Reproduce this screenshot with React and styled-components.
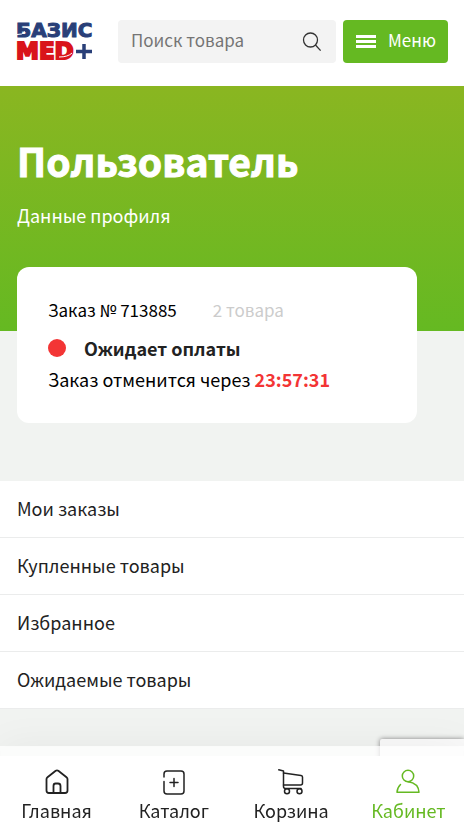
import React from 'react'
import styled, { createGlobalStyle } from 'styled-components'

const App = () => {
  return (
    <Page>
      <GlobalStyle />
      <Header>
        <LogoLink href="/" aria-label="БАЗИС MED+">
          <Logo />
        </LogoLink>
        <Search role="search">
          <SearchInput type="text" placeholder="Поиск товара" aria-label="Поиск товара" />
          <SearchButton type="button" aria-label="Найти">
            <svg width="20" height="20" viewBox="0 0 20 20" fill="none" stroke="#333" strokeWidth="1.3">
              <circle cx="8.500" cy="8" r="7" />
              <path d="M13.500 13L18.600 18.600" />
            </svg>
          </SearchButton>
        </Search>
        <MenuButton type="button">
          <Burger>
            <Bar />
            <Bar />
            <Bar />
          </Burger>
          <MenuText>Меню</MenuText>
        </MenuButton>
      </Header>

      <Hero>
        <Title>Пользователь</Title>
        <ProfileLink href="#profile">Данные профиля</ProfileLink>
      </Hero>

      <Card>
        <CardTop>
          <span>Заказ № 713885</span>
          <Count>2 товара</Count>
        </CardTop>
        <Status>
          <Dot />
          Ожидает оплаты
        </Status>
        <Cancel>
          Заказ отменится через <Timer>23:57:31</Timer>
        </Cancel>
      </Card>

      <Links>
        <Row href="#orders">Мои заказы</Row>
        <Row href="#bought">Купленные товары</Row>
        <Row href="#favorites">Избранное</Row>
        <Row href="#waiting">Ожидаемые товары</Row>
      </Links>

      <Badge />
      <Bottom>
        <Nav>
          <NavItem href="#home">
            <HomeIcon />
            Главная
          </NavItem>
          <NavItem href="#catalog">
            <CatalogIcon />
            Каталог
          </NavItem>
          <NavItem href="#cart">
            <CartIcon />
            Корзина
          </NavItem>
          <NavItem href="#cabinet" $active>
            <UserIcon />
            Кабинет
          </NavItem>
        </Nav>
      </Bottom>
    </Page>
  )
}

export default App

const Logo = () => (
  <svg width="76" height="40" viewBox="0 0 76 40" overflow="visible">
    <g fontFamily="'DejaVu Sans', sans-serif" fontWeight="700">
      <text x="-1" y="15" fontSize="20" fill="#293f78" stroke="#293f78" strokeWidth="1">БАЗИС</text>
      <text x="-1" y="37" fontSize="23" fill="#d9141b" stroke="#d9141b" strokeWidth="2">MED</text>
    </g>
    <path d="M0 12.500Q5 13 8 9.500" stroke="#fff" strokeWidth="1" fill="none" />
    <path d="M42 35Q51 35 55 31" stroke="#fff" strokeWidth="1" fill="none" />
    <path d="M67 22V37M60 29.500H75" stroke="#fff" strokeWidth="5.500" />
    <path d="M67 22V37M59 29.500H75" stroke="#293f78" strokeWidth="3.500" />
  </svg>
)

const HomeIcon = () => (
  <svg width="26" height="26" viewBox="0 0 26 26" fill="none" stroke="#222" strokeWidth="1.800" strokeLinejoin="round">
    <path d="M2.500 10Q2.500 9 3.500 8.200L11.700 1.800Q13 .8 14.300 1.800L22.500 8.200Q23.500 9 23.500 10V21.500Q23.500 24 21 24H5Q2.500 24 2.500 21.500Z" />
    <path d="M9.500 24V17Q9.500 14.500 11.500 14.500H14Q16.500 14.500 16.500 17V24" />
  </svg>
)

const CatalogIcon = () => (
  <svg width="26" height="26" viewBox="0 0 26 26" fill="none" stroke="#222" strokeWidth="1.500" strokeLinecap="round">
    <path d="M3 8V5Q3 2 6 2H20Q23 2 23 5V22Q23 25 20 25H6Q3 25 3 22V12.500" />
    <path d="M13 9.500V17.500M9 13.500H17" />
  </svg>
)

const CartIcon = () => (
  <svg width="26" height="26" viewBox="0 0 26 26" fill="none" stroke="#222" strokeWidth="1.500" strokeLinecap="round" strokeLinejoin="round">
    <path d="M.8 .8L5.500 2V17.500Q5.500 19.500 7.500 19.500H23" />
    <path d="M5.500 4L23 6.500Q24.500 6.800 24.500 8V14Q24.500 16 22.500 16H5.500" />
    <circle cx="9" cy="22.300" r="2.500" />
    <circle cx="21.500" cy="22.300" r="2.500" />
  </svg>
)

const UserIcon = () => (
  <svg width="26" height="26" viewBox="0 0 26 26" fill="none" stroke="#65b922" strokeWidth="1.500" strokeLinecap="round" strokeLinejoin="round">
    <circle cx="13" cy="7" r="5.700" />
    <path d="M5.500 15.500Q2.300 18.500 2 23.300H24Q23.500 14 13 12.700" />
  </svg>
)

const GlobalStyle = createGlobalStyle`
  * {
    box-sizing: border-box;
  }
  body {
    margin: 0;
    background: #f1f3f1;
    color: #222;
    font-family: "Noto Sans CJK SC", "Open Sans", sans-serif;
    font-size: 18px;
    line-height: 24px;
  }
  a {
    color: inherit;
    text-decoration: none;
  }
  button, input {
    font: inherit;
    border: 0;
    padding: 0;
  }
`

const Page = styled.div`
  min-height: 100vh;
  padding-bottom: 82px;
`

const Header = styled.header`
  display: flex;
  align-items: center;
  padding: 20px 16px 23px 17px;
  background: #fff;
`

const LogoLink = styled.a`
  display: flex;
  margin-right: 25px;
`

const Search = styled.form`
  display: flex;
  flex: 1;
  min-width: 0;
  height: 43px;
  margin-right: 7px;
  background: #f3f3f3;
  border-radius: 4px;
`

const SearchInput = styled.input`
  flex: 1;
  min-width: 0;
  padding: 0 0 4px 13px;
  background: none;
  outline: none;
  font-size: 17px;
  &::placeholder {
    color: #757575;
  }
`

const SearchButton = styled.button`
  display: flex;
  align-items: center;
  padding-right: 14px;
  background: none;
  cursor: pointer;
`

const MenuButton = styled.button`
  display: flex;
  align-items: center;
  gap: 12px;
  height: 43px;
  padding: 0 12px 0 13px;
  background: #65b922;
  color: #fff;
  font-size: 17px;
  border-radius: 4px;
  cursor: pointer;
`

const MenuText = styled.span`
  padding-bottom: 3px;
`

const Burger = styled.span`
  display: flex;
  flex-direction: column;
  gap: 2px;
`

const Bar = styled.span`
  width: 20px;
  height: 3px;
  background: #fff;
`

const Hero = styled.section`
  padding: 46px 17px 104px;
  background: linear-gradient(#8ab621, #65b922);
  color: #fff;
`

const Title = styled.h1`
  margin: 0 0 15px;
  font-size: 39px;
  line-height: 56px;
  font-weight: 700;
  -webkit-text-stroke: 1px #fff;
`

const ProfileLink = styled.a`
  display: block;
`

const Card = styled.section`
  max-width: 400px;
  margin: -64px 17px 58px;
  padding: 31px 31px 32px;
  background: #fff;
  border-radius: 12px;
  color: #000;
`

const CardTop = styled.div`
  display: flex;
  gap: 36px;
  margin-bottom: 14px;
  font-size: 17px;
`

const Count = styled.span`
  color: #ccc;
`

const Status = styled.div`
  display: flex;
  align-items: center;
  gap: 18px;
  margin-bottom: 7px;
  color: #222;
  font-weight: 700;
`

const Dot = styled.span`
  width: 18px;
  height: 18px;
  border-radius: 50%;
  background: #f33535;
`

const Cancel = styled.div``

const Timer = styled.b`
  color: #f33535;
`

const Links = styled.nav`
  display: flex;
  flex-direction: column;
`

const Row = styled.a`
  padding: 15px 17px 17px;
  background: #fff;
  border-bottom: 1px solid #ebecec;
`

// recaptcha corner, peeks out above the bottom bar
const Badge = styled.div`
  position: fixed;
  right: 0;
  bottom: 29px;
  width: 84px;
  height: 60px;
  background: #f9f9f9;
  border-radius: 2px 0 0 2px;
  box-shadow: 0 0 5px gray;
`

const Bottom = styled.div`
  position: fixed;
  left: 0;
  right: 0;
  bottom: 0;
  border-top: 10px solid rgba(255, 255, 255, 0.7);
  background: #fff;
  background-clip: padding-box;
  box-shadow: 0 0 40px rgba(0, 0, 0, 0.05);
`

const Nav = styled.nav`
  display: grid;
  grid-template-columns: repeat(4, 1fr);
  height: 72px;
  margin: 0 -3px 0 -2px;
`

const NavItem = styled.a`
  display: flex;
  flex-direction: column;
  align-items: center;
  gap: 3px;
  padding-top: 13px;
  color: ${(p) => (p.$active ? '#65b922' : '#222')};
`
